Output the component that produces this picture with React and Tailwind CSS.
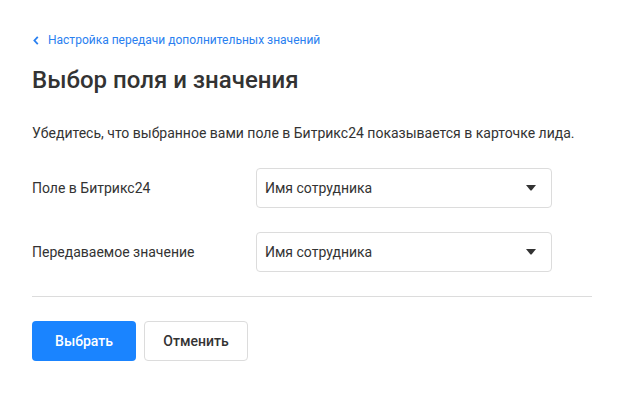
import React from "react";

function Select({ value }) {
  return (
    <div className="flex h-10 w-[296px] items-center justify-between rounded-[4px] border border-[#dcdcdc] bg-white pl-2 pr-[15px]">
      <span className="text-[14px] text-[#333]">{value}</span>
      <svg width="10" height="6" viewBox="0 0 10 6">
        <path d="M0 0 H10 L5.5 5.5 H4.5 Z" fill="#333" />
      </svg>
    </div>
  );
}

export default function App() {
  return (
    <div className="min-h-[393px] w-[624px] bg-white px-8 pt-8 font-['Roboto',sans-serif] text-[#333]">
      <a className="flex h-4 items-center gap-[9px] text-[12px] text-[#2a80f0]" href="#">
        <svg width="6" height="9" viewBox="0 0 6 9" className="ml-[1px]">
          <path d="M4.8 0.8 L1.4 4.5 L4.8 8.2" fill="none" stroke="#2a80f0" strokeWidth="1.8" />
        </svg>
        <span>Настройка передачи дополнительных значений</span>
      </a>
      <h1 className="mt-4 text-[24px] font-medium leading-8 text-[#333]">Выбор поля и значения</h1>
      <p className="mt-[27px] text-[14px] leading-5">
        Убедитесь, что выбранное вами поле в Битрикс24 показывается в карточке лида.
      </p>
      <div className="mt-[25px] flex flex-col gap-6">
        <div className="flex items-center">
          <div className="w-[224px] text-[14px]">Поле в Битрикс24</div>
          <Select value="Имя сотрудника" />
        </div>
        <div className="flex items-center">
          <div className="w-[224px] text-[14px]">Передаваемое значение</div>
          <Select value="Имя сотрудника" />
        </div>
      </div>
      <div className="mt-6 h-px w-[560px] bg-[#dcdcdc]" />
      <div className="mt-6 flex gap-2">
        <button className="h-10 w-[104px] rounded-[4px] bg-[#1a84ff] text-[14px] font-medium text-white">Выбрать</button>
        <button className="h-10 w-[104px] rounded-[4px] border border-[#dcdcdc] bg-white text-[14px] font-medium text-[#333]">Отменить</button>
      </div>
    </div>
  );
}
